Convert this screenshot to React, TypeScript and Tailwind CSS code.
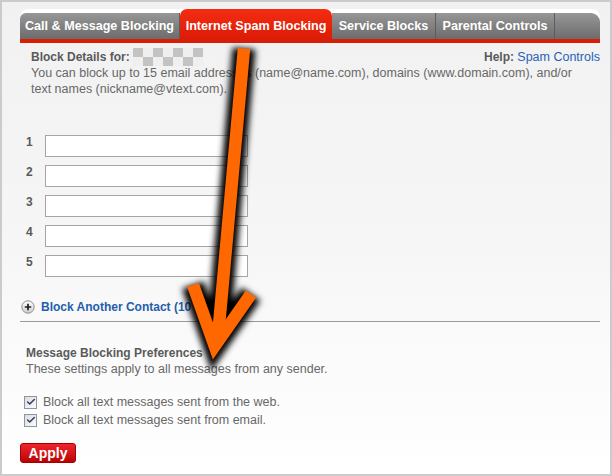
import { Check } from "lucide-react";

const tabs = [
  { label: "Call & Message Blocking", width: "w-[160px]", active: false },
  { label: "Internet Spam Blocking", width: "w-[152px]", active: true },
  { label: "Service Blocks", width: "w-[104px]", active: false },
  { label: "Parental Controls", width: "w-[119px]", active: false },
];

const prefs = [
  "Block all text messages sent from the web.",
  "Block all text messages sent from email.",
];

function TabBar() {
  return (
    <div>
      <div className="mt-[7px] flex h-[30px] rounded-t-[8px] bg-white">
        {tabs.map((tab, i) =>
          tab.active ? (
            <div
              key={tab.label}
              className={`${tab.width} flex h-[30px] items-center justify-center rounded-t-[7px] bg-gradient-to-b from-[#f42c12] to-[#dc1c06] pt-[3px] text-[12.6px] font-bold text-white`}
            >
              {tab.label}
            </div>
          ) : (
            <div
              key={tab.label}
              className={`${tab.width} mt-[4px] flex h-[26px] items-center justify-center border-r border-[#5c5c5c] bg-gradient-to-b from-[#979797] to-[#6c6c6c] text-[12.6px] font-bold text-white ${
                i === 0 ? "rounded-tl-[6px]" : ""
              }`}
            >
              {tab.label}
            </div>
          )
        )}
        <div className="mt-[4px] h-[26px] flex-1 rounded-tr-[9px] bg-gradient-to-b from-[#979797] to-[#6c6c6c]" />
      </div>
      <div className="h-[4px] bg-[#d91e08]" />
    </div>
  );
}

// pixelated placeholder next to the account label
function Checker() {
  const cells = Array.from({ length: 14 }, (_, i) => i);
  return (
    <span className="ml-[3px] grid h-[18px] w-[70px] shrink-0 grid-cols-7 grid-rows-2">
      {cells.map((i) => {
        const row = Math.floor(i / 7);
        const col = i % 7;
        const dark = (row + col) % 2 === 0;
        return <span key={i} className={dark ? "bg-[#c3c3c3]" : "bg-[#efefef]"} />;
      })}
    </span>
  );
}

function PlusIcon() {
  return (
    <svg width="14" height="14" viewBox="0 0 14 14">
      <defs>
        <linearGradient id="plusFill" x1="0" y1="0" x2="0" y2="1">
          <stop offset="0" stopColor="#ffffff" />
          <stop offset="1" stopColor="#cdcdcd" />
        </linearGradient>
      </defs>
      <circle cx="7" cy="7" r="6.2" fill="url(#plusFill)" stroke="#8d8d8d" />
      <path d="M7 3.8v6.4M3.8 7h6.4" stroke="#1e1e1e" strokeWidth="1.7" />
    </svg>
  );
}

function Checkbox() {
  return (
    <span className="flex h-[13px] w-[13px] items-center justify-center border border-[#8a96a3] bg-gradient-to-br from-[#dcdcdc] to-[#fbfbfb]">
      <Check className="h-[10px] w-[10px] text-[#2a3d66]" strokeWidth={3.5} />
    </span>
  );
}

function Arrow() {
  const shaft = "M244 48.5 L217.5 342";
  const head = "M193 285 L214.7 346 L251 294";
  return (
    <svg
      className="pointer-events-none absolute left-[-2px] top-[-2px]"
      width="612"
      height="476"
      viewBox="0 0 612 476"
    >
      <defs>
        <filter id="glow" x="-50%" y="-50%" width="200%" height="200%">
          <feGaussianBlur stdDeviation="3" />
        </filter>
      </defs>
      <g fill="none" stroke="#000" strokeWidth="23" strokeLinejoin="miter" strokeMiterlimit="10" filter="url(#glow)">
        <path d={shaft} />
        <path d={head} />
      </g>
      <g fill="none" stroke="#ff6800" strokeWidth="12.5" strokeLinejoin="miter" strokeMiterlimit="10">
        <path d={shaft} />
        <path d={head} />
      </g>
    </svg>
  );
}

export default function App() {
  return (
    <div className="relative h-[476px] w-[612px] overflow-hidden border-2 border-[#cbcbcb] bg-gradient-to-b from-[#f1f1f1] via-[#f6f6f6] to-white pl-[18px] pr-[10px] font-['Liberation_Sans',Arial,sans-serif] text-[12.5px] leading-[16px] text-[#686868]">
      <TabBar />

      <div className="mt-[6px] flex h-[16px] items-center justify-between pl-[11px]">
        <div className="flex h-[16px] items-center text-[12px] font-bold text-[#5a5a5a]">
          Block Details for:
          <Checker />
        </div>
        <div>
          <span className="text-[12px] font-bold text-[#5a5a5a]">Help: </span>
          <a className="text-[#2762b6]">Spam Controls</a>
        </div>
      </div>
      <p className="pl-[11px]">
        You can block up to 15 email addresses (name@name.com), domains (www.domain.com), and/or
        <br />
        text names (nickname@vtext.com).
      </p>

      <div className="mt-[38px] flex flex-col gap-[8px] pl-[6px]">
        {[1, 2, 3, 4, 5].map((n) => (
          <div key={n} className="flex items-start">
            <span className="-mt-[1px] w-[19px] text-[12px] font-bold text-[#5a5a5a]">{n}</span>
            <input className="h-[22px] w-[203px] border border-[#a5a5a5] bg-white outline-none" />
          </div>
        ))}
      </div>

      <div className="mt-[22px] flex h-[16px] items-center gap-[6px] pl-[1px]">
        <PlusIcon />
        <span className="text-[12px] font-bold text-[#1f5eae]">Block Another Contact (10</span>
      </div>

      <div className="mt-[6px] h-px bg-[#9a9a9a]" />

      <div className="mt-[23px] pl-[6px]">
        <div className="text-[12px] font-bold text-[#5a5a5a]">Message Blocking Preferences</div>
        <div>These settings apply to all messages from any sender.</div>
      </div>

      <div className="mt-[16px] pl-[4px]">
        {prefs.map((p) => (
          <label key={p} className="flex h-[18px] items-center gap-[6px]">
            <Checkbox />
            <span>{p}</span>
          </label>
        ))}
      </div>

      <button className="mt-[14px] flex h-[20px] w-[56px] items-center justify-center rounded-[3px] border border-[#a80000] bg-gradient-to-b from-[#f0242a] to-[#b80303] text-[14px] font-bold text-white">
        Apply
      </button>

      <Arrow />
    </div>
  );
}
